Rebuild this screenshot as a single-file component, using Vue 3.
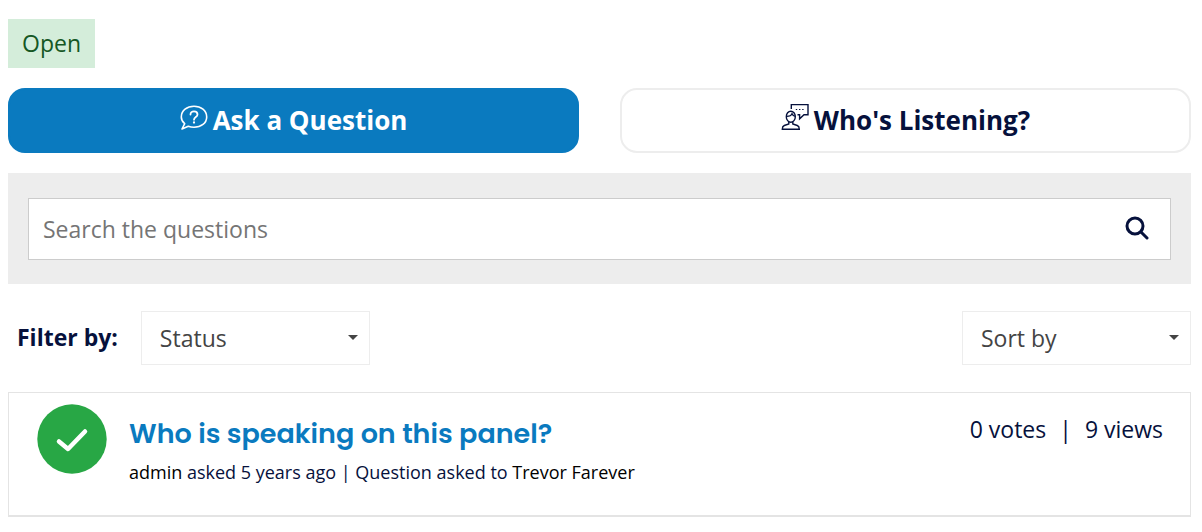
<script setup>
import { ref } from 'vue'

const search = ref('')
const status = ref('')
const sort = ref('')

const questions = [
  {
    id: 1,
    title: 'Who is speaking on this panel?',
    author: 'admin',
    age: '5 years ago',
    recipient: 'Trevor Farever',
    votes: 0,
    views: 9
  }
]
</script>

<template>
  <main class="page">
    <span class="badge">Open</span>

    <div class="actions">
      <button type="button" class="action primary">
        <svg class="action-icon" viewBox="0 0 28 28" fill="none" stroke="currentColor" stroke-width="1.600" stroke-linecap="round" stroke-linejoin="round" aria-hidden="true">
          <path d="M4.700 20.600C2.500 18.900 1.300 16.600 1.300 13.900C1.300 7.700 7 3.200 14 3.200S26.700 7.700 26.700 13.900S21 24.200 14 24.200C11.800 24.200 10 23.900 8.300 23.300L2 26L4.700 20.600Z" />
          <path d="M10.500 11.600C10.500 9.600 12 8.300 14 8.300S17.500 9.600 17.500 11.400C17.500 14 14 14 14 16.700" stroke-width="1.800" />
          <path d="M14 19.400V19.600" stroke-width="2.200" />
        </svg>
        <span>Ask a Question</span>
      </button>
      <button type="button" class="action">
        <svg class="action-icon" viewBox="0 0 28 28" fill="none" stroke="currentColor" stroke-width="1.400" aria-hidden="true">
          <path d="M10.300 6V1.600H27V11.700H23L18.600 15.800V11.700H16.500" />
          <path d="M14.800 6.500H16.200M18 6.500H19.400M21.200 6.500H22.600" stroke-width="1" />
          <ellipse cx="9.800" cy="13.700" rx="4.500" ry="5.500" />
          <path d="M5.300 13.400C8 13.500 10.300 12.500 11 10.800C11.700 12.500 13 13.300 14.400 13.400" />
          <path d="M7.800 18.600V21L3.300 22.500C1.800 23.100 1.300 24 1.300 26.300H18.300C18.300 24 17.800 23.100 16.300 22.500L11.800 21V18.600" />
        </svg>
        <span>Who's Listening?</span>
      </button>
    </div>

    <form class="search-panel" role="search" @submit.prevent>
      <div class="search-box">
        <input v-model="search" class="search-input" type="text" placeholder="Search the questions" aria-label="Search the questions" />
        <button type="submit" class="search-button" aria-label="Search">
          <svg viewBox="0 0 24 24" fill="none" stroke="currentColor" stroke-width="3" stroke-linecap="round" aria-hidden="true">
            <circle cx="10" cy="10" r="8" />
            <path d="M16 16L22 22" />
          </svg>
        </button>
      </div>
    </form>

    <div class="filters">
      <label for="status" class="filter-label">Filter by:</label>
      <div class="select-wrap">
        <select id="status" v-model="status" class="select">
          <option value="">Status</option>
        </select>
        <svg class="caret" viewBox="0 0 10 5" aria-hidden="true"><path d="M0 0H10L5 5Z" /></svg>
      </div>
      <div class="select-wrap sort">
        <select v-model="sort" class="select" aria-label="Sort by">
          <option value="">Sort by</option>
        </select>
        <svg class="caret" viewBox="0 0 10 5" aria-hidden="true"><path d="M0 0H10L5 5Z" /></svg>
      </div>
    </div>

    <article v-for="q in questions" :key="q.id" class="question">
      <span class="mark">
        <svg viewBox="0 0 70 70" fill="none" aria-hidden="true">
          <circle cx="35" cy="35" r="34.700" fill="#28a745" />
          <path d="M22 37.500L31 45L48 27.500" stroke="#fff" stroke-width="4.500" stroke-linecap="round" stroke-linejoin="round" />
        </svg>
      </span>
      <div class="body">
        <h2 class="title"><a href="#">{{ q.title }}</a></h2>
        <p class="meta">
          <a href="#">{{ q.author }}</a> asked {{ q.age }} | Question asked to <a href="#">{{ q.recipient }}</a>
        </p>
      </div>
      <div class="stats">
        <span>{{ q.votes }} votes</span>
        <span>|</span>
        <span>{{ q.views }} views</span>
      </div>
    </article>
  </main>
</template>

<style scoped>
.page {
  display: flex;
  flex-direction: column;
  padding: 19px 11px 15px 8px;
  color: #06113c;
  font-family: "Open Sans", "Noto Sans", sans-serif;
  font-size: 23px;
  line-height: 33px;
}

.badge {
  align-self: flex-start;
  padding: 8px 14px;
  background: #d4edda;
  color: #155724;
}

.actions {
  display: grid;
  grid-template-columns: 1fr 1fr;
  gap: 41px;
  margin-top: 20px;
}

.action {
  display: flex;
  align-items: center;
  justify-content: center;
  gap: 5px;
  height: 65px;
  padding: 0 16px 2px;
  border: 2px solid #ededed;
  border-radius: 17px;
  background: #fff;
  color: #06113c;
  font: 700 26px/36px "Open Sans", "Noto Sans", sans-serif;
  cursor: pointer;
}

.action.primary {
  border-color: #0a7abf;
  background: #0a7abf;
  color: #fff;
}

.action-icon {
  width: 28px;
  height: 28px;
  margin-bottom: 6px;
}

.search-panel {
  margin-top: 20px;
  padding: 25px 20px 24px;
  background: #ededed;
}

.search-box {
  display: flex;
  align-items: center;
  height: 62px;
  box-sizing: border-box;
  border: 1px solid #ccc;
  background: #fff;
}

.search-input {
  flex: 1;
  min-width: 0;
  padding: 0 14px;
  border: 0;
  outline: 0;
  background: transparent;
  color: inherit;
  font: inherit;
}

.search-input::placeholder {
  color: #757575;
  opacity: 1;
}

.search-button {
  display: flex;
  padding: 0 21px 2px;
  border: 0;
  background: transparent;
  color: #06113c;
  cursor: pointer;
}

.search-button svg {
  width: 24px;
  height: 24px;
}

.filters {
  display: flex;
  align-items: center;
  margin-top: 27px;
  padding-left: 9px;
}

.filter-label {
  margin-right: 23px;
  padding-bottom: 2px;
  font-weight: 700;
}

.select-wrap {
  position: relative;
  width: 229px;
}

.sort {
  margin-left: auto;
}

.select {
  display: block;
  width: 100%;
  height: 54px;
  padding: 0 32px 0 18px;
  border: 1px solid #ededed;
  border-radius: 0;
  appearance: none;
  background: #fff;
  color: #444;
  font: inherit;
}

.caret {
  position: absolute;
  top: 24px;
  right: 12px;
  width: 10px;
  height: 5px;
  fill: #444;
  pointer-events: none;
}

.question {
  display: flex;
  align-items: flex-start;
  margin-top: 27px;
  padding: 11px 27px 30px 28px;
  border: 1px solid #e4e4e4;
  border-bottom-width: 2px;
}

.mark,
.mark svg {
  display: block;
  width: 70px;
  height: 70px;
}

.body {
  flex: 1;
  margin-left: 22px;
}

.title {
  margin: 10px 0 0;
  color: #0a7abf;
  font: 600 27px/40px Poppins, Inter, sans-serif;
}

.title a,
.title a:visited {
  color: inherit;
  text-decoration: none;
}

.meta {
  margin: 5px 0 0;
  font-size: 18px;
  line-height: 26px;
}

.meta a {
  color: #000;
  text-decoration: none;
}

.stats {
  display: flex;
  gap: 13px;
  margin-top: 9px;
}
</style>

<style>
body {
  background: #fff;
}
</style>
